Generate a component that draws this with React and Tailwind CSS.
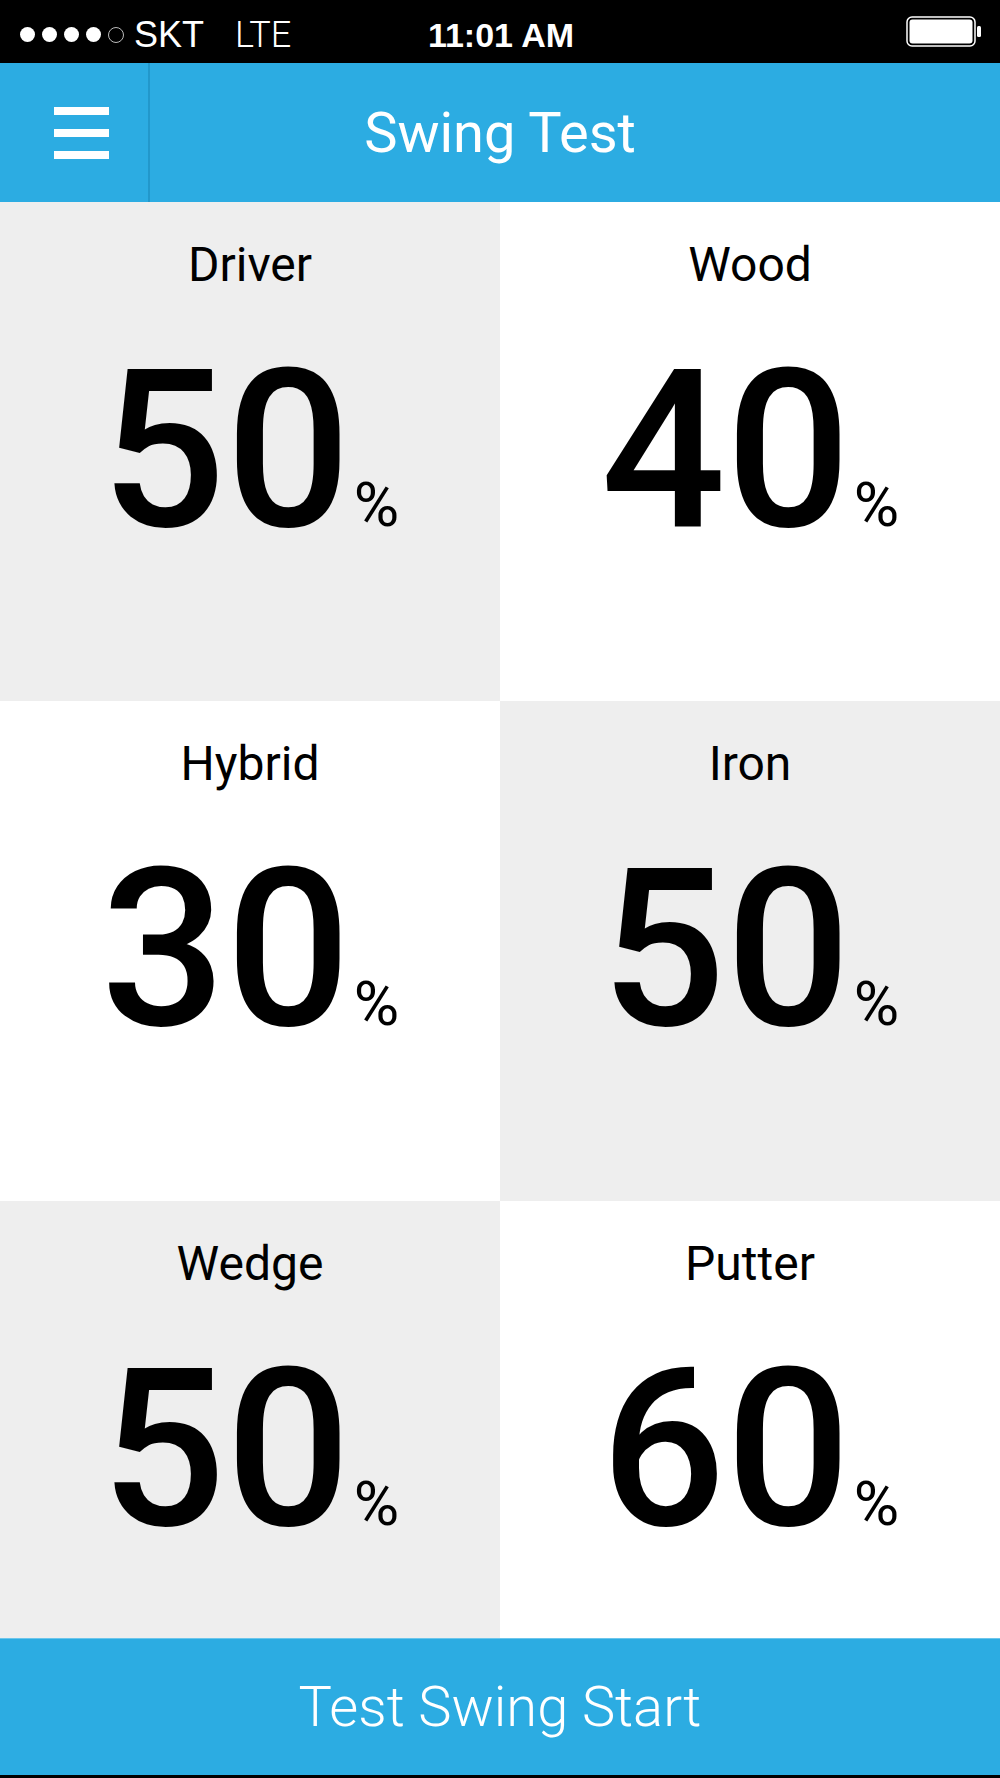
export default function App() {
  const cells = [
    { label: "Driver", value: "50", gray: true },
    { label: "Wood", value: "40", gray: false },
    { label: "Hybrid", value: "30", gray: false },
    { label: "Iron", value: "50", gray: true },
    { label: "Wedge", value: "50", gray: true },
    { label: "Putter", value: "60", gray: false },
  ];
  return (
    <div className="w-[1000px] h-[1778px] flex flex-col bg-black overflow-hidden">
      {/* Status bar */}
      <div className="h-[63px] bg-black flex items-center text-white pt-[6px] font-['Liberation_Sans',sans-serif]">
        <div className="flex-1 flex items-center pl-[20px]">
          <div className="flex items-center gap-[7px]">
            <span className="block w-[15px] h-[15px] rounded-full bg-white" />
            <span className="block w-[15px] h-[15px] rounded-full bg-white" />
            <span className="block w-[15px] h-[15px] rounded-full bg-white" />
            <span className="block w-[15px] h-[15px] rounded-full bg-white" />
            <span className="block w-[16px] h-[16px] rounded-full border border-[#bbbbbb]" />
          </div>
          <span className="ml-[10px] text-[36px] leading-none">SKT</span>
          <span className="ml-[31px] text-[36px] leading-none font-light font-['Roboto',sans-serif]">LTE</span>
        </div>
        <div className="text-[34px] font-bold leading-none">11:01 AM</div>
        <div className="flex-1 flex items-center justify-end pr-[18px] -mt-[6px]">
          <svg width="76" height="31" viewBox="0 0 76 31">
            <rect x="1" y="1" width="68" height="29" rx="5" fill="none" stroke="white" strokeWidth="1.5" />
            <rect x="3.5" y="3.5" width="63" height="24" rx="3" fill="white" />
            <rect x="71" y="10" width="4" height="11" rx="1.5" fill="white" />
          </svg>
        </div>
      </div>

      {/* Header */}
      <header className="h-[139px] bg-[#2cace2] flex">
        <div className="w-[148px] flex flex-col justify-center gap-[14px] pl-[54px]">
          <span className="block w-[55px] h-[8px] bg-white" />
          <span className="block w-[55px] h-[8px] bg-white" />
          <span className="block w-[55px] h-[8px] bg-white" />
        </div>
        <div className="w-[2px] bg-[#2298cb]" />
        <div className="flex-1 flex items-center justify-center text-white text-[56px] font-normal leading-none font-['Roboto',sans-serif]">
          Swing Test
        </div>
        <div className="w-[150px]" />
      </header>

      {/* Grid */}
      <div className="grid grid-cols-2 grid-rows-[499px_500px_437px]">
        {cells.map((c) => (
          <div
            key={c.label}
            className={
              c.gray
                ? "bg-[#eeeeee] flex flex-col items-center pt-[39px] text-black font-['Roboto',sans-serif]"
                : "bg-white flex flex-col items-center pt-[39px] text-black font-['Roboto',sans-serif]"
            }
          >
            <div className="text-[48px] leading-none">{c.label}</div>
            <div className="mt-[52px] flex items-baseline leading-none">
              <span className="text-[220px] font-medium leading-none">{c.value}</span>
              <span className="text-[62px] leading-none ml-[3px]">%</span>
            </div>
          </div>
        ))}
      </div>

      {/* Button */}
      <button className="h-[137px] w-full bg-[#2cace2] border-t border-[#6cc6ec] text-white text-[56px] font-light leading-none font-['Roboto',sans-serif] flex items-center justify-center">
        Test Swing Start
      </button>
      <div className="h-[3px] bg-black" />
    </div>
  );
}
